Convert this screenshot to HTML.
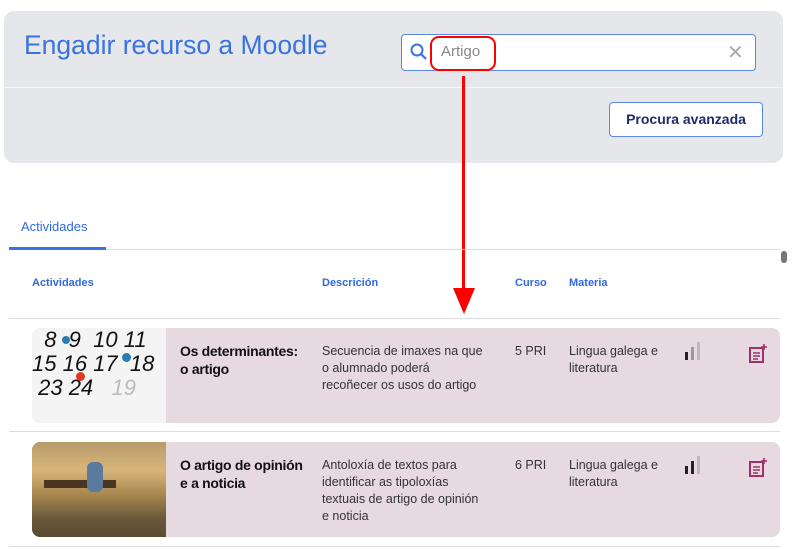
<!DOCTYPE html><html><head><style>
body{margin:0;width:800px;height:549px;background:#fff;font-family:"Liberation Sans",sans-serif;position:relative;overflow:hidden}
.a{position:absolute}
.row{position:absolute;left:32px;width:748px;height:95px;background:#e6d9df;border-radius:8px;overflow:hidden}
.t{position:absolute;font-size:14px;font-weight:bold;color:#111;line-height:18px;letter-spacing:-0.3px}
.d{position:absolute;font-size:12.5px;color:#333;line-height:17px}
.h{position:absolute;top:277px;font-size:11px;font-weight:bold;color:#2f6ae0}
</style></head><body>
<div class="a" style="left:4px;top:11px;width:779px;height:152px;background:#e5e7ea;border-radius:10px"></div>
<div class="a" style="left:4px;top:87px;width:779px;height:1px;background:#f5f6f7"></div>
<div class="a" style="left:24px;top:30px;font-size:26.5px;color:#3a72e0">Engadir recurso a Moodle</div>
<div class="a" style="left:401px;top:34px;width:353px;height:35px;border:1px solid #5b87e5;border-radius:4px;background:#fff"></div>
<svg class="a" style="left:408px;top:41px" width="22" height="22"><circle cx="9" cy="9" r="5.5" fill="none" stroke="#3a72e0" stroke-width="2"/><line x1="13" y1="13" x2="18" y2="18" stroke="#3a72e0" stroke-width="2.2"/></svg>
<div class="a" style="left:430px;top:36px;width:62px;height:31px;border:2.5px solid #f00;border-radius:9px"></div>
<div class="a" style="left:441px;top:43px;font-size:15px;color:#888">Artigo</div>
<div class="a" style="left:727px;top:40px;font-size:20px;color:#aaa">✕</div>
<div class="a" style="left:609px;top:102px;width:152px;height:33px;border:1px solid #5b87e5;border-radius:4px;background:#fff;font-size:14px;font-weight:bold;color:#1f2a6a;text-align:center;line-height:33px">Procura avanzada</div>
<div class="a" style="left:462px;top:76px;width:3px;height:222px;background:#f00"></div>
<svg class="a" style="left:453px;top:288px" width="22" height="27"><polygon points="0,0 22,0 11,26" fill="#f00"/></svg>
<div class="a" style="left:21px;top:219px;font-size:13px;color:#2f6ae0">Actividades</div>
<div class="a" style="left:9px;top:249px;width:771px;height:1px;background:#ddd"></div>
<div class="a" style="left:9px;top:247px;width:97px;height:3px;background:#3a72e0"></div>
<div class="a" style="left:781px;top:251px;width:6px;height:12px;background:#777;border-radius:3px"></div>
<div class="h" style="left:32px">Actividades</div><div class="h" style="left:322px">Descrición</div><div class="h" style="left:515px">Curso</div><div class="h" style="left:569px">Materia</div>
<div class="a" style="left:9px;top:318px;width:771px;height:1px;background:#ddd"></div>
<div class="row" style="top:328px">
<div class="a" style="left:0;top:0;width:134px;height:95px;background:#f4f4f4;font:italic 22px 'Liberation Sans';color:#111;line-height:24px;overflow:hidden">&nbsp; 8 &nbsp;9 &nbsp;10 11<br>15 16 17 &nbsp;18<br>&nbsp;23 24 &nbsp;&nbsp;<span style="color:#bbb">19</span></div>
<div class="a" style="left:30px;top:8px;width:8px;height:8px;border-radius:50%;background:#2a7db0"></div>
<div class="a" style="left:90px;top:25px;width:9px;height:9px;border-radius:50%;background:#2a7db0"></div>
<div class="a" style="left:44px;top:44px;width:9px;height:9px;border-radius:50%;background:#e03a20"></div>
<div class="t" style="left:148px;top:14px">Os determinantes:<br>o artigo</div>
<div class="d" style="left:290px;top:15px">Secuencia de imaxes na que<br>o alumnado poderá<br>recoñecer os usos do artigo</div>
<div class="d" style="left:483px;top:15px">5 PRI</div>
<div class="d" style="left:537px;top:15px">Lingua galega e<br>literatura</div>
<svg class="a" style="left:652px;top:14px" width="20" height="22"><rect x="1" y="10" width="3" height="8" fill="#222"/><rect x="7" y="5" width="3" height="13" fill="#999"/><rect x="13" y="0" width="3" height="18" fill="#bbb"/></svg>
<svg class="a" style="left:716px;top:16px" width="20" height="20"><rect x="2" y="4" width="13" height="14" fill="none" stroke="#a0306a" stroke-width="2"/><line x1="5" y1="9" x2="12" y2="9" stroke="#a0306a" stroke-width="1.5"/><line x1="5" y1="12" x2="12" y2="12" stroke="#a0306a" stroke-width="1.5"/><line x1="5" y1="15" x2="10" y2="15" stroke="#a0306a" stroke-width="1.5"/><path d="M16 0v6M13 3h6" stroke="#a0306a" stroke-width="1.6"/></svg>
</div>
<div class="a" style="left:9px;top:431px;width:771px;height:1px;background:#ddd"></div>
<div class="row" style="top:442px">
<div class="a" style="left:0;top:0;width:134px;height:95px;background:linear-gradient(180deg,#b89a6a 0%,#d8b57a 30%,#a88850 55%,#6a5a3a 80%,#5a4a32 100%)"></div>
<div class="a" style="left:12px;top:38px;width:72px;height:8px;background:#4a3520"></div>
<div class="a" style="left:55px;top:20px;width:16px;height:30px;background:#5a7aa0;border-radius:6px"></div>
<div class="t" style="left:148px;top:14px">O artigo de opinión<br>e a noticia</div>
<div class="d" style="left:290px;top:15px">Antoloxía de textos para<br>identificar as tipoloxías<br>textuais de artigo de opinión<br>e noticia</div>
<div class="d" style="left:483px;top:15px">6 PRI</div>
<div class="d" style="left:537px;top:15px">Lingua galega e<br>literatura</div>
<svg class="a" style="left:652px;top:14px" width="20" height="22"><rect x="1" y="10" width="3" height="8" fill="#222"/><rect x="7" y="5" width="3" height="13" fill="#222"/><rect x="13" y="0" width="3" height="18" fill="#bbb"/></svg>
<svg class="a" style="left:716px;top:16px" width="20" height="20"><rect x="2" y="4" width="13" height="14" fill="none" stroke="#a0306a" stroke-width="2"/><line x1="5" y1="9" x2="12" y2="9" stroke="#a0306a" stroke-width="1.5"/><line x1="5" y1="12" x2="12" y2="12" stroke="#a0306a" stroke-width="1.5"/><line x1="5" y1="15" x2="10" y2="15" stroke="#a0306a" stroke-width="1.5"/><path d="M16 0v6M13 3h6" stroke="#a0306a" stroke-width="1.6"/></svg>
</div>
<div class="a" style="left:9px;top:546px;width:771px;height:1px;background:#ddd"></div>
</body></html>
